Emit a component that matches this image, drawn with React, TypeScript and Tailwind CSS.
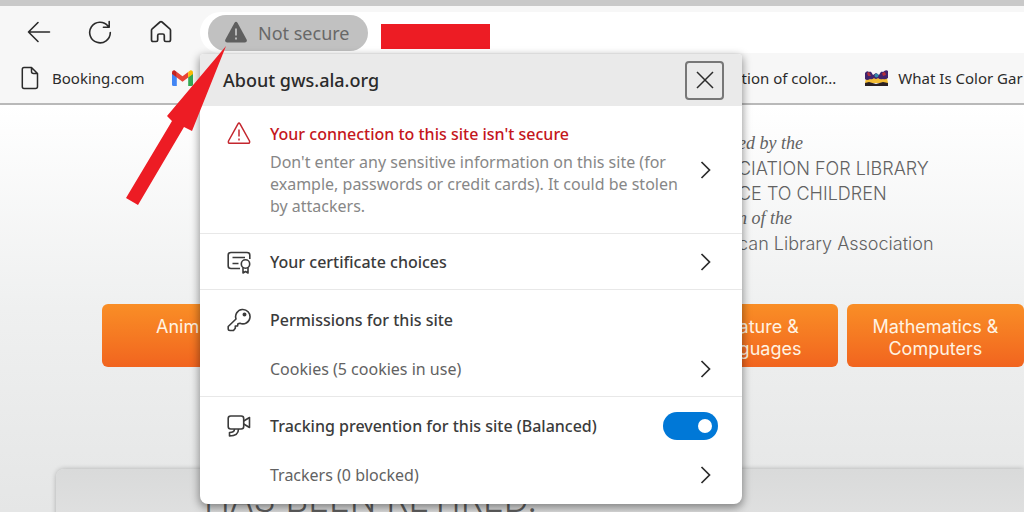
import React from "react";

const ui = "font-['Noto_Sans',sans-serif]";

function Chevron() {
  return (
    <svg className="h-5 w-5 shrink-0 text-[#2b2b2b]" viewBox="0 0 20 20" fill="none" stroke="currentColor" strokeWidth="1.7" aria-hidden="true">
      <path d="M6.500 2l8 8-8 8" />
    </svg>
  );
}

function Toolbar() {
  return (
    <div className="flex h-[47px] bg-[#f7f7f7] text-[#2b2b2b]">
      <div className="flex w-[200px] shrink-0 items-center gap-[37px] pl-[27px] pt-[5px]">
        <button aria-label="Back">
          <svg className="h-6 w-6" viewBox="0 0 24 24" fill="none" stroke="currentColor" strokeWidth="1.6" strokeLinecap="round" strokeLinejoin="round">
            <path d="M22.500 12H1.500M11 2.500L1.500 12L11 21.500" />
          </svg>
        </button>
        <button aria-label="Refresh">
          <svg className="h-6 w-6" viewBox="0 0 24 24" fill="none" stroke="currentColor" strokeWidth="1.6" strokeLinecap="round" strokeLinejoin="round">
            <path d="M22.300 12.500A10.300 10.300 0 1 1 20 6M21.200 1.500V7.300H15.400" />
          </svg>
        </button>
        <button aria-label="Home">
          <svg className="h-6 w-6" viewBox="0 0 24 24" fill="none" stroke="currentColor" strokeWidth="1.7" strokeLinejoin="round">
            <path d="M2.500 10.200Q2.500 9.400 3.200 8.800L11 2Q12 1.200 13 2L20.800 8.800Q21.500 9.400 21.500 10.200V19.800Q21.500 21.500 19.900 21.500H16.800Q15.300 21.500 15.300 20V15.500Q15.300 14 13.800 14H10.200Q8.700 14 8.700 15.500V20Q8.700 21.500 7.200 21.500H4.100Q2.500 21.500 2.500 19.800Z" />
          </svg>
        </button>
      </div>
      <div className="mt-[6px] flex flex-1 rounded-l-full bg-white">
        <button className="ml-2 mt-[3px] flex h-9 w-40 items-center gap-[10px] rounded-full bg-[#c1c1c1] pl-4 text-lg text-[#686868]">
          <svg className="h-6 w-6" viewBox="0 0 24 24" aria-hidden="true">
            <path d="M10.400 2Q12 -.5 13.600 2L22.600 18.500Q23.600 21.300 20.800 21.500H3.200Q.4 21.300 1.400 18.500Z" fill="#5f5f5f" />
            <path d="M12 7.500v7M12 16.500v2" stroke="#c1c1c1" strokeWidth="1.800" />
          </svg>
          Not secure
        </button>
        <div className="ml-[13px] mt-3 h-[25px] w-[109px] bg-[#ed1c24]" />
      </div>
    </div>
  );
}

function Bookmarks() {
  return (
    <nav className="flex h-[52px] items-center border-b-2 border-[#b9b9b9] bg-[#f7f7f7] text-[15px] text-[#2b2b2b]">
      <a href="#booking" className="ml-[21px] flex items-center gap-[13px]">
        <svg className="h-6 w-[18px]" viewBox="0 0 18 24" fill="none" stroke="currentColor" strokeWidth="1.5" strokeLinejoin="round" aria-hidden="true">
          <path d="M3 1.500H10.500L16.500 7.500V20.500Q16.500 22.500 14.500 22.500H3Q1.300 22.500 1.300 20.500V3.500Q1.300 1.500 3 1.500ZM10.500 1.500V5.500Q10.500 7.500 12.500 7.500H16.500" />
        </svg>
        Booking.com
      </a>
      <a href="#mail" aria-label="Gmail" className="ml-[27px]">
        <svg className="h-4 w-[21px]" viewBox="0 0 21 16" aria-hidden="true">
          <path d="M0 3.500L4.800 7V16H1.500Q0 16 0 14.500Z" fill="#4285f4" />
          <path d="M21 3.500L16.200 7V16H19.500Q21 16 21 14.500Z" fill="#34a853" />
          <path d="M4.800 2L10.500 6.200L16.200 2V7.500L10.500 11.800L4.800 7.500Z" fill="#ea4335" />
          <path d="M0 3Q0 0 2.500 .3L4.800 2V7.500L0 4Z" fill="#c5221f" />
          <path d="M21 3Q21 0 18.500 .3L16.200 2V7.500L21 4Z" fill="#fbbc04" />
        </svg>
      </a>
      <div className="ml-[549px] flex items-center gap-[29px] whitespace-nowrap">
        <a href="#color">tion of color...</a>
        <a href="#gamut" className="flex items-center gap-[10px]">
          <svg className="h-4 w-[23px]" viewBox="0 0 23 16" aria-hidden="true">
            <path d="M1 8L5 6H18L22 8L23 13H0Z" fill="#f4bd35" />
            <path d="M0 3Q2 0 4 2Q6 0 8 5L11 3L14 5Q16 0 18 2Q21 -1 23 1V8Q20 10 18 9Q15 10 13 8Q11 10 9 8Q7 10 5 9Q2 11 0 9Z" fill="#41246d" />
            <path d="M2 3L4 2L6 6L3 6ZM17 3L20 2L21 5L18 6Z" fill="#b52f3b" />
            <circle cx="11.500" cy="5.500" r="2" fill="#3289aa" />
            <path d="M0 13L4 12L11 14L18 12L23 13V16H0Z" fill="#292024" />
          </svg>
          What Is Color Gar
        </a>
      </div>
    </nav>
  );
}

function SiteInfo() {
  return (
    <section aria-label="Site information" className="absolute left-[200px] top-[54px] w-[542px] overflow-hidden rounded-lg rounded-t-sm bg-white text-base text-[#3b3b3b] shadow-[0_3px_9px_1px_rgba(0,0,0,0.4)]">
      <header className="flex h-[52px] items-center justify-between bg-[#eaeaea] pl-[23px] pr-[18px]">
        <h2 className="text-lg font-medium text-[#2b2b2b]">About gws.ala.org</h2>
        <button aria-label="Close" className="flex h-[39px] w-[39px] items-center justify-center rounded-sm border-2 border-[#777]">
          <svg className="h-5 w-5" viewBox="0 0 20 20" fill="none" stroke="#2b2b2b" strokeWidth="1.500"><path d="M2 2l16 16M18 2L2 18" /></svg>
        </button>
      </header>
      <a href="#connection" className="flex h-[128px] items-center border-b border-[#e8e8e8] pl-[27px] pr-[27px]">
        <svg className="mr-[19px] mt-4 h-6 w-6 shrink-0 self-start" viewBox="0 0 24 24" fill="none" stroke="#c4262e" strokeWidth="1.500" strokeLinejoin="round" aria-hidden="true">
          <path d="M11 1.800Q12 .2 13 1.800L22.500 19Q23.200 21.300 21 21.300H3Q.8 21.300 1.500 19ZM12 7.500v7M12 16.500v2" />
        </svg>
        <div className="flex-1 leading-[22px]">
          <h3 className="mb-[6px] font-medium text-[#c4161c]">Your connection to this site isn't secure</h3>
          <p className="text-[#878787]">Don't enter any sensitive information on this site (for<br />example, passwords or credit cards). It could be stolen<br />by attackers.</p>
        </div>
        <Chevron />
      </a>
      <a href="#certificate" className="flex h-14 items-center border-b border-[#e8e8e8] pl-[27px] pr-[27px]">
        <svg className="mr-[19px] h-6 w-6" viewBox="0 0 24 24" fill="none" stroke="currentColor" strokeWidth="1.600" strokeLinejoin="round" aria-hidden="true">
          <path d="M13 18.500H4Q1.200 18.500 1.200 16V5Q1.200 2.500 4 2.500H20Q22.800 2.500 22.800 5V9M5.500 7.500H18M5.500 13.500H11.500M16 17.500V23L18.500 21.500L21 23V17.500" />
          <circle cx="18.500" cy="14" r="4.200" />
        </svg>
        <h3 className="flex-1 font-medium">Your certificate choices</h3>
        <Chevron />
      </a>
      <div className="border-b border-[#e8e8e8] pb-[3px] pl-[27px] pr-[27px] pt-[5px]">
        <div className="flex h-[49px] items-center">
          <svg className="mr-[19px] h-6 w-6" viewBox="0 0 24 24" fill="none" stroke="currentColor" strokeWidth="1.600" strokeLinejoin="round" aria-hidden="true">
            <path d="M9 11A7.200 7.200 0 1 1 13 15.300L11 15.800L10.500 18H8.300V20.300L6.500 22.500H3Q1.200 22.500 1.200 20.800V18.500Z" />
            <circle cx="17.500" cy="6.500" r="1.200" fill="currentColor" />
          </svg>
          <h3 className="font-medium">Permissions for this site</h3>
        </div>
        <a href="#cookies" className="flex h-[49px] items-center pl-[43px] text-[#626262]"><span className="flex-1">Cookies (5 cookies in use)</span><Chevron /></a>
      </div>
      <div className="pb-[5px] pl-[27px] pr-[27px] pt-[4px]">
        <div className="flex h-[49px] items-center">
          <svg className="mr-[19px] h-6 w-6 shrink-0" viewBox="0 0 24 24" fill="none" stroke="currentColor" strokeWidth="1.600" strokeLinejoin="round" aria-hidden="true">
            <rect x="1.200" y="2" width="15.500" height="13" rx="2.500" />
            <path d="M16.700 7L22.500 3.500V13.500L16.700 10M7.500 15Q7.500 18.500 2.500 18.500V22Q11.500 22 11.500 15" />
          </svg>
          <label htmlFor="tracking" className="flex-1 font-medium">Tracking prevention for this site (Balanced)</label>
          <input id="tracking" type="checkbox" role="switch" defaultChecked className="-mr-[3px] h-7 w-[55px] appearance-none rounded-full bg-[#0078d7] before:ml-[35px] before:mt-[7px] before:block before:h-[14px] before:w-[14px] before:rounded-full before:bg-white" />
        </div>
        <a href="#trackers" className="flex h-[49px] items-center pl-[43px] text-[#626262]"><span className="flex-1">Trackers (0 blocked)</span><Chevron /></a>
      </div>
    </section>
  );
}

const tab = "h-[63px] rounded-md bg-linear-to-b from-[#f98e26] to-[#f1641f] pt-3 text-lg leading-[22px] text-[#fff3e2]";

function Website() {
  return (
    <main className="flex-1 overflow-hidden bg-linear-to-b from-white via-[#eff0f0] to-[#e5e6e6] font-['Inter',sans-serif]">
      <div className="flex h-[199px] justify-end pt-[26px]">
        <div className="w-[286px] text-lg leading-[25px] font-light text-[#626262]">
          <p className="font-['Liberation_Serif',serif] leading-[25px] italic">ed by the</p>
          <p>CIATION FOR LIBRARY</p>
          <p>CE TO CHILDREN</p>
          <p className="font-['Liberation_Serif',serif] leading-[25px] italic">n of the</p>
          <p>can Library Association</p>
        </div>
      </div>
      <nav className="ml-[102px] grid grid-cols-5 gap-[9px]">
        <button className={`${tab} flex pl-[54px]`}>Anim</button>
        <button className={`${tab} col-start-4 flex pl-[78px] text-left`}><span>ature &amp;<br />guages</span></button>
        <button className={`${tab} flex justify-center text-center`}><span>Mathematics &amp;<br />Computers</span></button>
      </nav>
      <section className="ml-14 mt-[102px] h-24 rounded-tl-lg bg-linear-to-b from-[#d9dada] to-[#e6e6e6] pl-[148px] pt-[10px] shadow-[0_0_5px_rgba(0,0,0,0.25)]">
        <h1 className="text-[35px] leading-10 font-light text-[#5f5f5f]">HAS BEEN RETIRED.</h1>
      </section>
    </main>
  );
}

export default function App() {
  return (
    <div className={`relative flex h-screen flex-col overflow-hidden bg-white ${ui}`}>
      <div className="h-[6px] shrink-0 bg-[#c9c9c9]" />
      <Toolbar />
      <Bookmarks />
      <Website />
      <SiteInfo />
      <svg className="pointer-events-none absolute left-[125px] top-[46px] h-[160px] w-[102px]" viewBox="0 0 102 160" aria-hidden="true">
        <path d="M101 0L67 85L59 81L13 159L1 152L47 75L42 70Z" fill="#ed1c24" />
      </svg>
    </div>
  );
}
